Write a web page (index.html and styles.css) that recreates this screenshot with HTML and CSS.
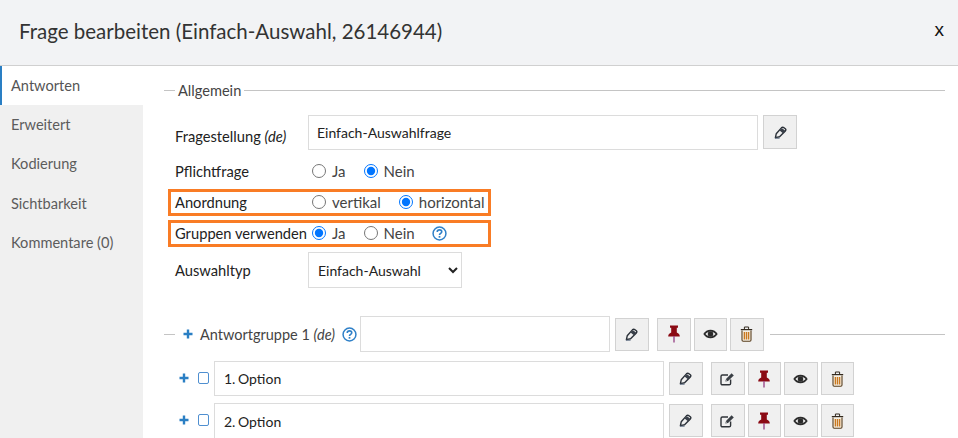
FILE: index.html
```html
<!DOCTYPE html>
<html lang="de">
<head>
<meta charset="utf-8">
<title>Frage bearbeiten</title>
<link rel="stylesheet" href="styles.css">
</head>
<body>
<svg class="defs" width="0" height="0" aria-hidden="true">
  <symbol id="i-pencil" viewBox="0 0 14 14">
    <path d="M1.5 12.5 L2.4 8.4 L8 2 C8.8 1.2 9.8 1.2 10.7 1.8 L12.2 3 C13 3.8 12.9 4.6 12.2 5.4 L6 11.6 Z" fill="none" stroke="#2a3038" stroke-width="1.5" stroke-linejoin="round"/>
    <path d="M8.6 2.4 L12.2 5 L9.6 7.8 L6 4.8 Z" fill="#3a404a"/>
    <path d="M1 13.2 L6 13.2" stroke="#5a6a80" stroke-width="1"/>
  </symbol>
  <symbol id="i-pin" viewBox="0 0 14 18">
    <path d="M3 0.5 H11 V2.8 H9.8 V7.6 C11.6 8.4 12.8 9.6 12.8 11.4 H1.2 C1.2 9.6 2.4 8.4 4.2 7.6 V2.8 H3 Z" fill="#8b0a14"/>
    <path d="M7 11 V17.5" stroke="#9a4a8a" stroke-width="1.4"/>
  </symbol>
  <symbol id="i-eye" viewBox="0 0 16 10">
    <path d="M0.3 5 C2.2 2 4.8 0.4 8 0.4 C11.2 0.4 13.8 2 15.7 5 C13.8 8 11.2 9.6 8 9.6 C4.8 9.6 2.2 8 0.3 5 Z" fill="#2b2b2b"/>
    <path d="M2.6 5 C4 3.4 6 2.4 8 2.4 C10 2.4 12 3.4 13.4 5 C12 6.6 10 7.6 8 7.6 C6 7.6 4 6.6 2.6 5 Z" fill="#eee"/>
    <circle cx="8" cy="5" r="2.9" fill="#2b2b2b"/>
  </symbol>
  <symbol id="i-trash" viewBox="0 0 13 16">
    <path d="M2 4.5 V14 C2 14.7 2.5 15.2 3.2 15.2 H9.8 C10.5 15.2 11 14.7 11 14 V4.5" fill="#f6efe2" stroke="#5a3f1e" stroke-width="1.1"/>
    <path d="M0.8 3.6 H12.2" stroke="#33291e" stroke-width="1.2"/>
    <path d="M4.4 3.2 V1 H8.6 V3.2" fill="none" stroke="#33291e" stroke-width="1"/>
    <path d="M4.4 6 V13.6 M6.5 6 V13.6 M8.6 6 V13.6" stroke="#c9781f" stroke-width="1.4"/>
  </symbol>
  <symbol id="i-edit" viewBox="0 0 15 14">
    <path d="M10.6 7.6 V11.4 C10.6 12.2 10 12.8 9.2 12.8 H2.4 C1.6 12.8 1 12.2 1 11.4 V4.4 C1 3.6 1.6 3 2.4 3 H8" fill="none" stroke="#2f3338" stroke-width="1.4"/>
    <path d="M5.4 9.4 L6 7 L11.6 1.2 L13.8 3.4 L8 9 Z" fill="#3a3f45"/>
    <path d="M6.4 8.4 L7 7.8" stroke="#fff" stroke-width="1"/>
  </symbol>
  <symbol id="i-help" viewBox="0 0 14 14">
    <circle cx="7" cy="7" r="6" fill="none" stroke="#2f80c8" stroke-width="1.4"/>
    <path d="M4.9 5.5 C4.9 4.2 5.8 3.6 7 3.6 C8.2 3.6 9.1 4.3 9.1 5.4 C9.1 6.9 7 6.9 7 8.4" fill="none" stroke="#2f80c8" stroke-width="1.5"/>
    <rect x="6.2" y="9.3" width="1.6" height="1.6" fill="#2f80c8"/>
  </symbol>
  <symbol id="i-plus" viewBox="0 0 10 10">
    <path d="M5 0.5 V9.5 M0.5 5 H9.5" stroke="#2a7fc4" stroke-width="2.4"/>
  </symbol>
</svg>

<header class="header">
  <h1 class="title">Frage bearbeiten (Einfach-Auswahl, 26146944)</h1>
  <span class="close">x</span>
</header>

<div class="layout">
  <nav class="sidebar">
    <a class="tab tab-active">Antworten</a>
    <a class="tab">Erweitert</a>
    <a class="tab">Kodierung</a>
    <a class="tab">Sichtbarkeit</a>
    <a class="tab">Kommentare (0)</a>
  </nav>

  <main class="content">
    <div class="legend">
      <span class="rule-short"></span>
      <span class="legend-text">Allgemein</span>
      <span class="rule-long"></span>
    </div>

    <div class="row row-question">
      <span class="label">Fragestellung <em>(de)</em></span>
      <input class="field field-question" type="text" value="Einfach-Auswahlfrage">
      <button class="btn btn-first btn-after-field"><svg class="ic ic-pencil"><use href="#i-pencil"/></svg></button>
    </div>

    <div class="row row-plain">
      <span class="label">Pflichtfrage</span>
      <label class="choice"><input type="radio" name="a">Ja</label>
      <label class="choice"><input type="radio" name="a" checked>Nein</label>
    </div>

    <div class="row row-marked row-first-marked">
      <span class="label">Anordnung</span>
      <label class="choice"><input type="radio" name="b">vertikal</label>
      <label class="choice"><input type="radio" name="b" checked>horizontal</label>
    </div>

    <div class="row row-marked row-second-marked">
      <span class="label">Gruppen verwenden</span>
      <label class="choice"><input type="radio" name="c" checked>Ja</label>
      <label class="choice"><input type="radio" name="c">Nein</label>
      <svg class="ic ic-help ic-help-row"><use href="#i-help"/></svg>
    </div>

    <div class="row row-select">
      <span class="label">Auswahltyp</span>
      <select class="select"><option>Einfach-Auswahl</option></select>
    </div>

    <div class="group-head">
      <span class="rule-short"></span>
      <svg class="ic ic-plus ic-plus-group"><use href="#i-plus"/></svg>
      <span class="group-label">Antwortgruppe 1 <em>(de)</em></span>
      <svg class="ic ic-help ic-help-group"><use href="#i-help"/></svg>
      <input class="field field-group" type="text">
      <button class="btn btn-after-field"><svg class="ic ic-pencil"><use href="#i-pencil"/></svg></button>
      <div class="btn-set">
        <button class="btn"><svg class="ic ic-pin"><use href="#i-pin"/></svg></button>
        <button class="btn"><svg class="ic ic-eye"><use href="#i-eye"/></svg></button>
        <button class="btn"><svg class="ic ic-trash"><use href="#i-trash"/></svg></button>
      </div>
      <span class="rule-long rule-group"></span>
    </div>

    <div class="option">
      <svg class="ic ic-plus"><use href="#i-plus"/></svg>
      <span class="check"></span>
      <input class="field field-option" type="text" value="1. Option">
      <button class="btn btn-after-field"><svg class="ic ic-pencil"><use href="#i-pencil"/></svg></button>
      <div class="btn-set">
        <button class="btn"><svg class="ic ic-edit"><use href="#i-edit"/></svg></button>
        <button class="btn"><svg class="ic ic-pin"><use href="#i-pin"/></svg></button>
        <button class="btn"><svg class="ic ic-eye"><use href="#i-eye"/></svg></button>
        <button class="btn"><svg class="ic ic-trash"><use href="#i-trash"/></svg></button>
      </div>
    </div>

    <div class="option option-next">
      <svg class="ic ic-plus"><use href="#i-plus"/></svg>
      <span class="check"></span>
      <input class="field field-option" type="text" value="2. Option">
      <button class="btn btn-after-field"><svg class="ic ic-pencil"><use href="#i-pencil"/></svg></button>
      <div class="btn-set">
        <button class="btn"><svg class="ic ic-edit"><use href="#i-edit"/></svg></button>
        <button class="btn"><svg class="ic ic-pin"><use href="#i-pin"/></svg></button>
        <button class="btn"><svg class="ic ic-eye"><use href="#i-eye"/></svg></button>
        <button class="btn"><svg class="ic ic-trash"><use href="#i-trash"/></svg></button>
      </div>
    </div>
  </main>
</div>
</body>
</html>
```

FILE: styles.css
```css
* { box-sizing: border-box; }

html, body {
  margin: 0;
  height: 438px;
  overflow: hidden;
  background: #fff;
  font-family: Lato, "Open Sans", sans-serif;
  font-size: 14.7px;
  color: #333;
}

.defs { display: block; height: 0; }

.header {
  height: 66px;
  display: flex;
  align-items: center;
  justify-content: space-between;
  padding: 0 14px 2px 19px;
  background: #f2f3f5;
  border-bottom: 1px solid #d0d0d0;
}

.title {
  margin: 0;
  font-size: 20.5px;
  font-weight: 400;
  line-height: 1.2;
  color: #333;
}

.close {
  font-family: "Liberation Sans", sans-serif;
  font-size: 19px;
  line-height: 1;
  color: #111;
  margin-bottom: 5px;
}

.layout {
  display: flex;
  height: 372px;
}

.sidebar {
  width: 143px;
  flex: none;
  background: #f0f0f0;
}

.tab {
  display: block;
  height: 39.2px;
  padding: 11px 0 0 11px;
  font-size: 14.6px;
  line-height: 18px;
  color: #5c5c5c;
}

.tab-active {
  background: #fff;
  border-left: 2px solid #2a7fc4;
  padding-left: 9px;
  color: #555;
}

.content {
  flex: 1;
  padding: 14px 13px 0 21px;
  min-width: 0;
}

.legend {
  display: flex;
  align-items: center;
  height: 20px;
}

.rule-short {
  width: 11px;
  flex: none;
  height: 1px;
  background: #c4c4c4;
}

.rule-long {
  flex: 1;
  height: 1px;
  background: #c4c4c4;
}

.legend-text {
  padding: 0 3px;
  font-size: 14.6px;
  color: #444;
}

.row {
  display: flex;
  align-items: center;
  padding-left: 11px;
}

.label {
  width: 133px;
  flex: none;
  color: #222;
  white-space: nowrap;
}

.row-question {
  margin-top: 15px;
  align-items: flex-start;
}

.row-question .label { padding-top: 12px; }

.row-plain {
  margin-top: 10px;
  height: 22px;
}

.row-marked {
  width: 323px;
  height: 27px;
  margin-left: 4px;
  padding-left: 4px;
  padding-bottom: 1px;
  border: 3px solid #f97c25;
}

.row-first-marked { margin-top: 7px; }
.row-second-marked { margin-top: 4px; }

.row-select {
  margin-top: 5px;
}

.choice {
  display: flex;
  align-items: center;
  margin-right: 14px;
  color: #444;
  font-size: 15px;
  line-height: 18px;
}

.choice input {
  width: 14px;
  height: 14px;
  margin: 0 6px 0 4px;
  flex: none;
}

.field {
  height: 35px;
  padding: 0 8px;
  border: 1px solid #dcdcdc;
  background: #fff;
  font-family: inherit;
  font-size: 14px;
  color: #222;
  outline: none;
  border-radius: 0;
}

.field-question { width: 450px; }
.field-group { width: 250px; height: 36px; margin-left: 3px; }
.field-option { width: 450px; margin-left: 5px; padding: 0 9px; word-spacing: -1px; }
.option-next .field-option { height: 37px; }

.select {
  width: 154px;
  height: 36px;
  padding: 0 5px;
  border: 1px solid #dcdcdc;
  border-radius: 0;
  background: #fff;
  font-family: inherit;
  font-size: 14px;
  color: #222;
}

.btn {
  display: flex;
  align-items: center;
  justify-content: center;
  width: 33.5px;
  height: 33px;
  padding: 0;
  flex: none;
  background: #f0f0f0;
  border: 1px solid #d2d2d2;
  border-radius: 0;
}

.btn-first { width: 34px; height: 34px; }
.btn-after-field { margin-left: 5px; }

.btn-set {
  display: flex;
  gap: 3px;
  margin-left: 8.5px;
}

.ic { display: block; flex: none; }
.ic-pencil { width: 13px; height: 13px; }
.ic-pin { width: 14px; height: 18px; }
.ic-eye { width: 15px; height: 10px; }
.ic-trash { width: 13px; height: 16px; }
.ic-edit { width: 15px; height: 14px; }
.ic-help { width: 15px; height: 15px; }
.ic-plus { width: 10px; height: 10px; }
.ic-help-row { margin-left: 3px; }

.group-head {
  display: flex;
  align-items: center;
  margin-top: 28px;
  height: 36px;
}

.ic-plus-group { margin-left: 8px; }

.group-label {
  margin-left: 7px;
  font-size: 14.5px;
  color: #444;
  white-space: nowrap;
}

.ic-help-group { margin-left: 7px; }
.rule-group { margin-left: 6px; }

.option {
  display: flex;
  align-items: flex-start;
  margin-top: 9px;
  padding-left: 15px;
  height: 35px;
}

.option-next { margin-top: 7px; }

.option > .ic-plus { margin-top: 12px; }

.check {
  width: 11px;
  height: 12px;
  flex: none;
  margin: 11px 0 0 9px;
  border: 1px solid #4f8fd0;
  border-radius: 2px;
  background: #fff;
}

.option .btn { margin-top: 1px; }
```
